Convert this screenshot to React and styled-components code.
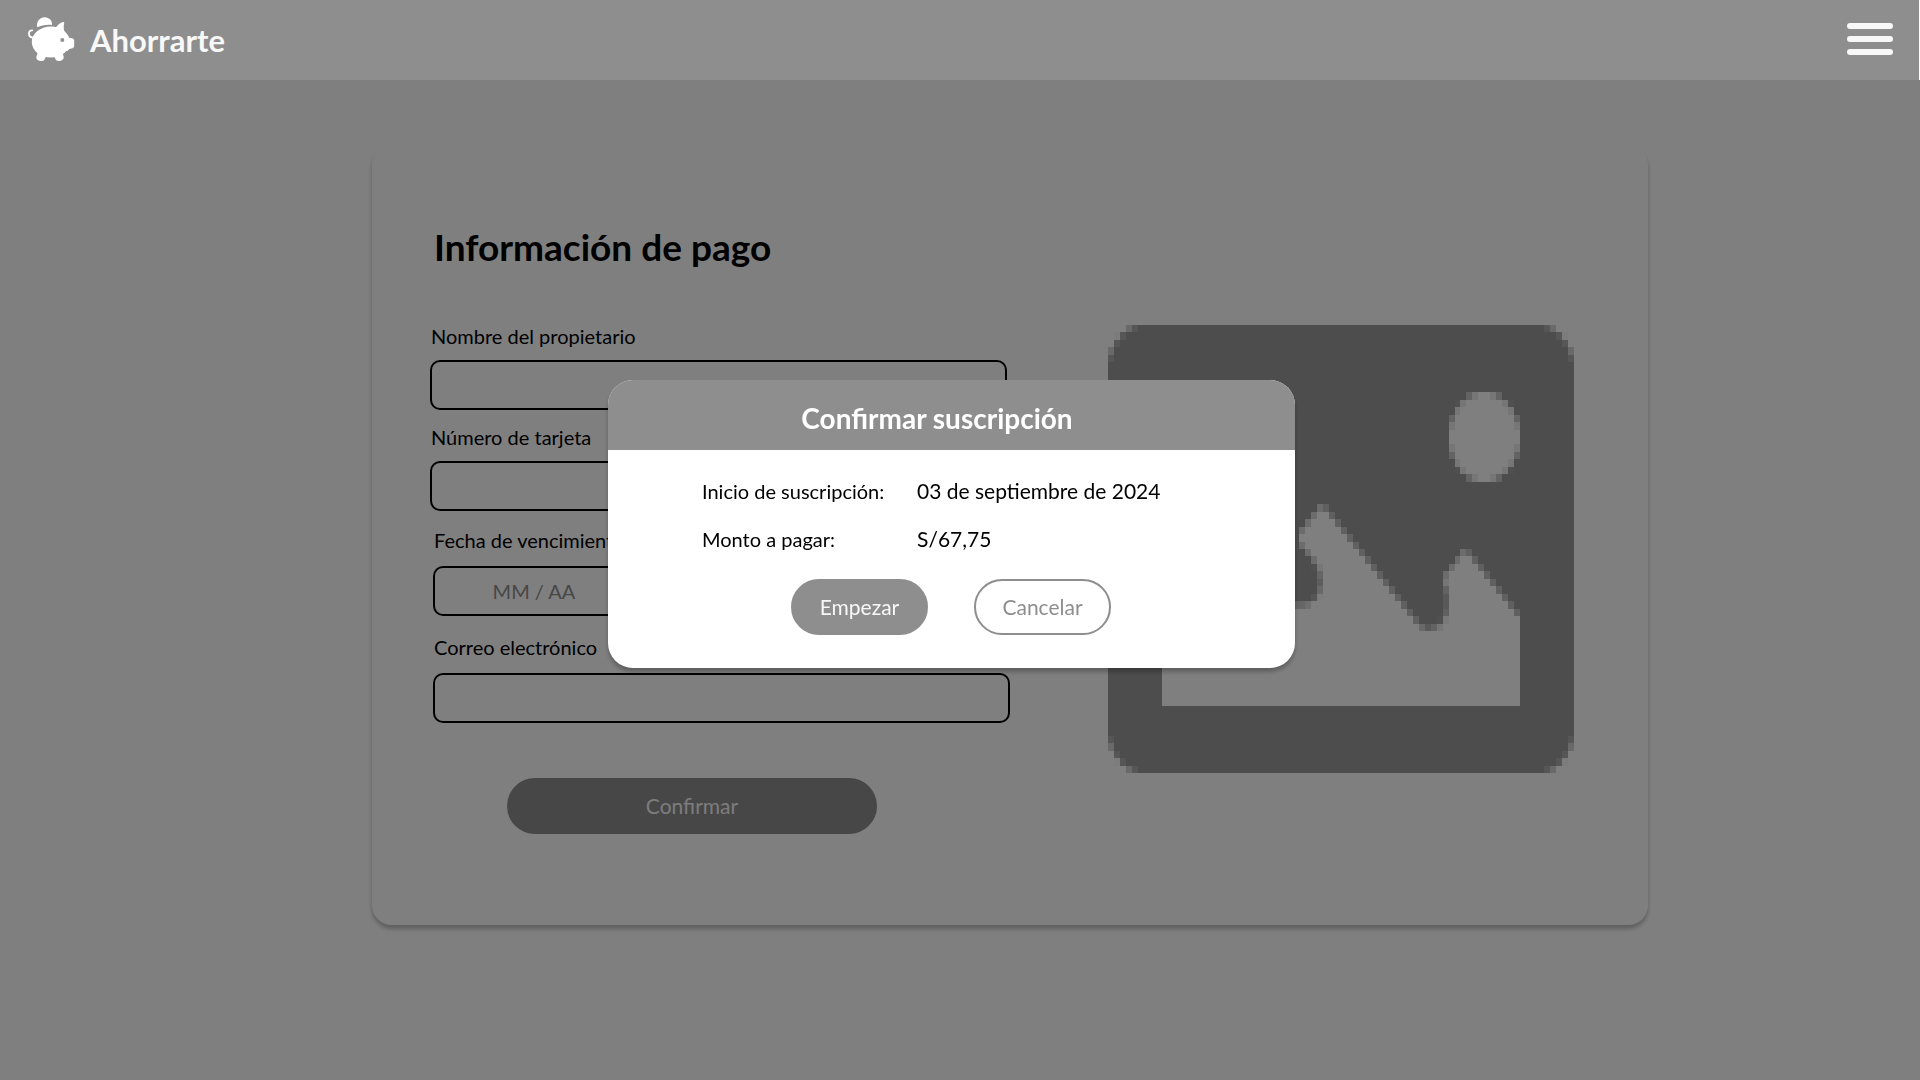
import React from "react";
import styled, { createGlobalStyle } from "styled-components";

const GlobalStyle = createGlobalStyle`
  *, *::before, *::after { box-sizing: border-box; }
  body {
    margin: 0;
    background: #fff;
    color: #000;
    font-family: Lato, "Noto Sans", sans-serif;
    font-size: 20px;
    line-height: 28px;
  }
  button, input { font: inherit; }
`;

const Page = styled.div`
  min-height: 100vh;
  display: flex;
  flex-direction: column;
`;

const TopBar = styled.header`
  height: 80px;
  padding: 0 26px 0 28px;
  display: flex;
  align-items: center;
  justify-content: space-between;
  background: #8e8e8e;
  border-right: 1px solid #fff;
`;

const Brand = styled.a`
  display: flex;
  align-items: center;
  gap: 15px;
  color: #f8f8f8;
  font-size: 31px;
  font-weight: 700;
  line-height: 40px;
  text-decoration: none;
`;

const MenuButton = styled.button`
  width: 46px;
  padding: 0 0 2px;
  display: flex;
  flex-direction: column;
  gap: 7px;
  border: 0;
  background: none;
`;

const MenuBar = styled.span`
  height: 6px;
  border-radius: 3px;
  background: #f8f8f8;
`;

const Content = styled.main`
  flex: 1;
  padding: 65px 272px 155px 372px;
`;

const Card = styled.section`
  display: flex;
  justify-content: space-between;
  padding: 78px 74px 91px 58px;
  border-radius: 20px;
  background: #fff;
  box-shadow: 0 4px 4px rgba(0, 0, 0, 0.25);
`;

const PaymentForm = styled.form`
  width: 580px;
  display: flex;
  flex-direction: column;
`;

const Title = styled.h1`
  margin: 0 0 51px;
  padding-left: 4px;
  font-size: 37px;
  font-weight: 700;
  line-height: 48px;
`;

const FieldGroup = styled.div`
  display: flex;
  flex-direction: column;
  gap: ${(p) => (p.$inset ? "17px" : "13px")};
  padding: ${(p) => (p.$inset ? "15px 0 0 3px" : "0 3px 0 0")};
`;

const Field = styled.div`
  display: flex;
  flex-direction: column;
  gap: ${(p) => (p.$loose ? "12px" : "10px")};
`;

const Label = styled.label`
  padding-left: 1px;
`;

const Input = styled.input`
  width: ${(p) => (p.$short ? "202px" : "100%")};
  height: 50px;
  padding: 0 16px;
  border: 2px solid #000;
  border-radius: 10px;
  background: #fff;
  text-align: ${(p) => (p.$short ? "center" : "left")};
  &::placeholder { color: #8e8e8e; opacity: 1; }
`;

const Button = styled.button`
  width: ${(p) => (p.$wide ? "370px" : "137px")};
  height: 56px;
  padding: 0;
  border: 2px solid #8e8e8e;
  border-radius: 28px;
  background: ${(p) => (p.$outline ? "#fff" : "#8e8e8e")};
  color: ${(p) => (p.$outline ? "#8e8e8e" : "#f8f8f8")};
  font-size: 21px;
`;

const FormActions = styled.div`
  display: flex;
  justify-content: center;
  padding: 55px 56px 0 0;
`;

const Picture = styled.svg`
  display: block;
  width: 466px;
  height: 448px;
  margin-top: 102px;
`;

const Overlay = styled.div`
  position: fixed;
  inset: 80px 0 0;
  display: flex;
  justify-content: center;
  align-items: flex-start;
  padding: 300px 17px 0 0;
  background: rgba(0, 0, 0, 0.5);
`;

const Dialog = styled.section`
  width: 687px;
  border-radius: 25px;
  overflow: hidden;
  background: #fff;
  box-shadow: 0 4px 4px rgba(0, 0, 0, 0.25);
`;

const DialogTitle = styled.h2`
  margin: 0;
  padding: 20px 29px 14px 0;
  background: #8e8e8e;
  color: #fff;
  font-size: 28px;
  font-weight: 700;
  line-height: 36px;
  text-align: center;
`;

const Details = styled.dl`
  display: grid;
  grid-template-columns: 215px 1fr;
  row-gap: 20px;
  margin: 0;
  padding: 27px 94px 26px;
`;

const Term = styled.dt`
  margin: 0;
`;

const Value = styled.dd`
  margin: 0;
  font-size: 21px;
`;

const DialogActions = styled.div`
  display: flex;
  justify-content: center;
  gap: 46px;
  padding: 0 1px 33px 0;
`;

const COLS = 78;
const ROWS = 60;

const LAND = [
  [9, 51], [69, 51], [69, 39], [60, 30], [56, 34], [56.4, 35], [56.8, 36.5],
  [56.8, 38], [56.2, 39.5], [55, 40.5], [53.5, 40.8], [52.3, 40.4], [51, 39],
  [36, 24], [32, 28], [32, 29], [34.5, 31.6], [35.5, 33], [35.7, 34.5],
  [35.3, 36], [34.4, 37], [33, 37.5], [20, 37.5], [9, 46],
];

const insidePolygon = (points, x, y) => {
  let inside = false;
  for (let i = 0, j = points.length - 1; i < points.length; j = i++) {
    const [xi, yi] = points[i];
    const [xj, yj] = points[j];
    if (yi > y !== yj > y && x < ((xj - xi) * (y - yi)) / (yj - yi) + xi) {
      inside = !inside;
    }
  }
  return inside;
};

const isInk = (x, y) => {
  const dx = Math.max(6 - x, x - (COLS - 6), 0);
  const dy = Math.max(6 - y, y - (ROWS - 6), 0);
  if (dx * dx + dy * dy > 36) return false;
  if ((x - 63) ** 2 + (y - 15) ** 2 < 36) return false;
  return !insidePolygon(LAND, x, y);
};

const coverage = (col, row) => {
  let hits = 0;
  for (let i = 0; i < 4; i++) {
    for (let j = 0; j < 4; j++) {
      if (isInk(col + (i + 0.5) / 4, row + (j + 0.5) / 4)) hits++;
    }
  }
  return hits / 16;
};

// Each row of the low-resolution picture becomes runs of equally shaded cells.
const runs = [];
for (let row = 0; row < ROWS; row++) {
  let current = null;
  for (let col = 0; col < COLS; col++) {
    const shade = coverage(col, row);
    if (current && current.shade === shade) {
      current.width++;
    } else {
      current = { col, row, width: 1, shade };
      runs.push(current);
    }
  }
}

function PlaceholderPicture() {
  return (
    <Picture
      viewBox={`0 0 ${COLS} ${ROWS}`}
      preserveAspectRatio="none"
      shapeRendering="crispEdges"
      role="img"
      aria-label="Imagen"
    >
      {runs.filter((r) => r.shade > 0).map((r) => (
        <rect
          key={`${r.col}-${r.row}`}
          x={r.col}
          y={r.row}
          width={r.width}
          height="1"
          fill="#9a9a9a"
          fillOpacity={r.shade}
        />
      ))}
    </Picture>
  );
}

function PiggyBank() {
  return (
    <svg width="47" height="46" viewBox="0 0 47 46" fill="#fff" aria-hidden="true">
      <path d="M9.200 10.300C8 4.800 11.800.3 16.700.3c4.600 0 7.900 3.700 7.300 7.700C18.500 7.400 13.500 8.300 9.200 10.300Z" />
      <ellipse cx="22.800" cy="25" rx="19" ry="15.400" />
      <path d="M27.500 11.500C29.300 8 32 5.600 35.200 5c.9-.2 1.200.2 1 1-.7 2.800-.7 5.500.3 9Z" />
      <path d="M38 17.500c1.800 2 2.200 3.500 4.200 3.500 2.600 0 4 .8 4 3v4.500c0 1.900-1 2.700-2.700 3-2 .3-3 .8-4 2.500L34 34Z" />
      <path d="M8.500 33.500c1.400 1.600 1.300 2.500.5 4.200-1.300 2.800-.8 4.700 1.500 5.700 1.700.7 3.500.9 4.800.3 1.500-.6 1.400-2.200 2.500-3.700L20 36Z" />
      <path d="M36.500 34.500c-1.800 1.600-1.900 2.200-1.200 3.800 1 2.500.3 4.400-1.900 5.100-1.600.6-3.500.8-4.700.2-1.300-.6-1.200-2.200-2.200-3.600L25 35Z" />
      <path d="M5.500 20.500C2.500 20.800.9 18.900.9 16.600c0-2.200 1.300-3.500 3.300-3.300" fill="none" stroke="#fff" strokeWidth="1.800" strokeLinecap="round" />
      <circle cx="34.300" cy="23" r="2" fill="#8e8e8e" />
    </svg>
  );
}

function TextField({ id, label, loose, ...rest }) {
  return (
    <Field $loose={loose}>
      <Label htmlFor={id}>{label}</Label>
      <Input id={id} type="text" {...rest} />
    </Field>
  );
}

export default function App() {
  return (
    <>
      <GlobalStyle />
      <Page>
        <TopBar>
          <Brand href="#">
            <PiggyBank />
            Ahorrarte
          </Brand>
          <MenuButton type="button" aria-label="Menú">
            <MenuBar />
            <MenuBar />
            <MenuBar />
          </MenuButton>
        </TopBar>
        <Content>
          <Card>
            <PaymentForm>
              <Title>Información de pago</Title>
              <FieldGroup>
                <TextField id="owner" label="Nombre del propietario" />
                <TextField id="card" label="Número de tarjeta" />
              </FieldGroup>
              <FieldGroup $inset>
                <TextField id="expiry" label="Fecha de vencimiento" placeholder="MM / AA" loose $short />
                <TextField id="email" label="Correo electrónico" loose />
              </FieldGroup>
              <FormActions>
                <Button type="button" $wide>Confirmar</Button>
              </FormActions>
            </PaymentForm>
            <PlaceholderPicture />
          </Card>
        </Content>
      </Page>
      <Overlay>
        <Dialog role="dialog" aria-modal="true" aria-labelledby="dialog-title">
          <DialogTitle id="dialog-title">Confirmar suscripción</DialogTitle>
          <Details>
            <Term>Inicio de suscripción:</Term>
            <Value>03 de septiembre de 2024</Value>
            <Term>Monto a pagar:</Term>
            <Value>S/67,75</Value>
          </Details>
          <DialogActions>
            <Button type="button">Empezar</Button>
            <Button type="button" $outline>Cancelar</Button>
          </DialogActions>
        </Dialog>
      </Overlay>
    </>
  );
}
